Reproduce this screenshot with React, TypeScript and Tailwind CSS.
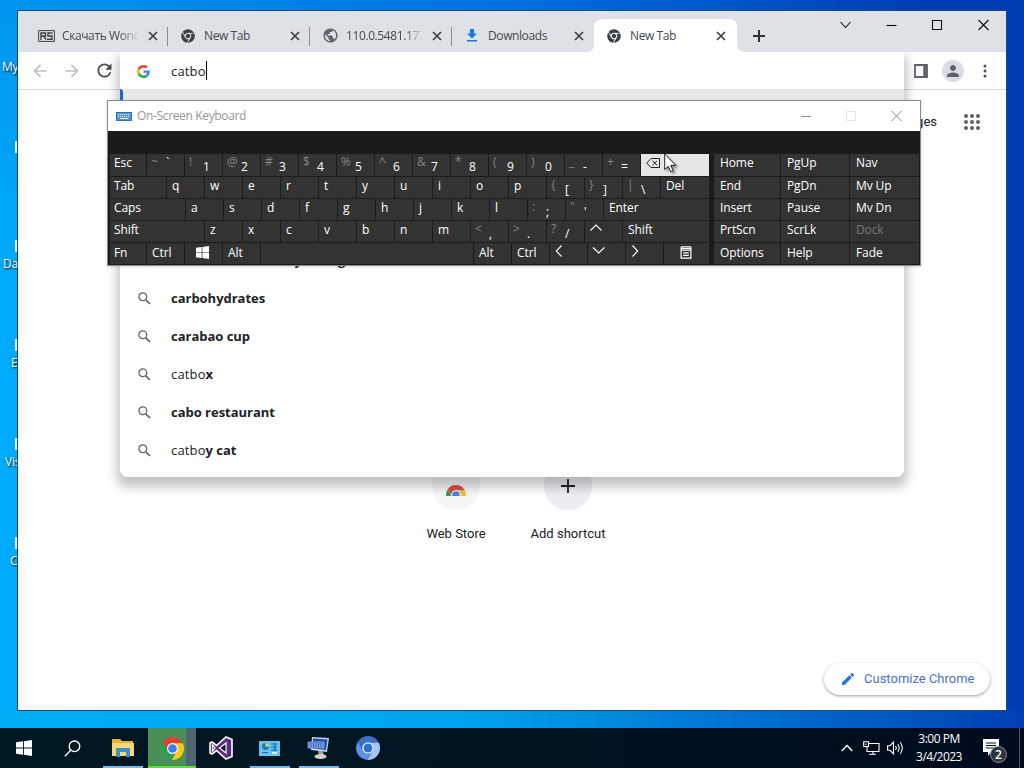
import type { ReactNode } from "react";
import { FaChrome } from "react-icons/fa";
import { MdArrowBack, MdArrowForward, MdEdit, MdPerson, MdPublic, MdRefresh } from "react-icons/md";

type KeyDef = {
  w: number;
  label?: string;
  shift?: string;
  icon?: ReactNode;
  kind?: "active" | "disabled";
};

function Chevron({ d }: { d: string }) {
  return (
    <svg width="14" height="14" viewBox="0 0 14 14" fill="none" stroke="#fff" strokeWidth="1.1">
      <path d={d} />
    </svg>
  );
}

function WindowsLogo({ size }: { size: number }) {
  return (
    <svg width={size} height={size} viewBox="0 0 16 16" fill="#fff">
      <path d="M0 2.3 7 1.3V7.6H0ZM7.9 1.2 16 0V7.6H7.9ZM0 8.4H7V14.7L0 13.7ZM7.9 8.4H16V16L7.9 14.8Z" />
    </svg>
  );
}

const letters = (s: string): KeyDef[] => s.split("").map((label) => ({ w: 38, label }));
const pairs = (list: string[]): KeyDef[] => list.map((p) => ({ w: 38, shift: p[0], label: p[1] }));

const mainRows: KeyDef[][] = [
  [
    { w: 37, label: "Esc" },
    ...pairs(["~`", "!1", "@2", "#3", "$4", "%5", "^6", "&7", "*8", "(9", ")0", "_-", "+="]),
    {
      w: 69,
      kind: "active",
      icon: (
        <svg width="15" height="12" viewBox="0 0 15 12" fill="none" stroke="#222" strokeWidth="1" className="mt-[3px] ml-px">
          <path d="M5 1.5H13.5V10.5H5L.8 6ZM6.5 3.8 11 8.2M11 3.8 6.5 8.2" />
        </svg>
      ),
    },
  ],
  [{ w: 57, label: "Tab" }, ...letters("qwertyuiop"), ...pairs(["{[", "}]", "|\\"]), { w: 49, label: "Del" }],
  [{ w: 76, label: "Caps" }, ...letters("asdfghjkl"), ...pairs([":;", "\"'"]), { w: 106, label: "Enter" }],
  [
    { w: 95, label: "Shift" },
    ...letters("zxcvbnm"),
    ...pairs(["<,", ">.", "?/"]),
    { w: 38, icon: <Chevron d="M1.5 9.5 7 4 12.5 9.5" /> },
    { w: 87, label: "Shift" },
  ],
  [
    { w: 37, label: "Fn" },
    { w: 38, label: "Ctrl" },
    { w: 38, icon: <span className="ml-[7px] mt-[2px]"><WindowsLogo size={13} /></span> },
    { w: 38, label: "Alt" },
    { w: 213 },
    { w: 38, label: "Alt" },
    { w: 38, label: "Ctrl" },
    { w: 38, icon: <Chevron d="M7.5 1.500 2.300 7 7.500 12.500" /> },
    { w: 38, icon: <Chevron d="M1 3.500 6.700 9 12.400 3.500" /> },
    { w: 38, icon: <Chevron d="M2.500 1.500 7.700 7 2.500 12.500" /> },
    {
      w: 46,
      icon: (
        <svg width="12" height="13" viewBox="0 0 12 13" fill="none" stroke="#fff" strokeWidth="1.2" className="ml-[12px] mt-[2px]">
          <path d="M1 .8H11M1 2.500H11M1.100 4.200H10.900V12.200H1.100ZM3.200 6.800H8.800M3.200 9.400H8.800M1.100 1V4.200M10.900 1V4.200" />
        </svg>
      ),
    },
  ],
];

const sideRows: KeyDef[][] = [
  ["Home", "PgUp", "Nav"],
  ["End", "PgDn", "Mv Up"],
  ["Insert", "Pause", "Mv Dn"],
  ["PrtScn", "ScrLk", "Dock"],
  ["Options", "Help", "Fade"],
].map((row) =>
  row.map((label, i): KeyDef => ({ w: [67, 69, 70][i], label, kind: label === "Dock" ? "disabled" : undefined }))
);

function Key({ k, first, last, side }: { k: KeyDef; first: boolean; last: boolean; side: boolean }) {
  const bg = k.kind === "active" ? "bg-[#e6e6e6]" : "bg-[#333333]";
  const color = k.kind === "disabled" ? "text-[#7a7a7a]" : "text-white";
  const shifted = k.shift && k.shift !== "~";
  return (
    <div className="h-full shrink-0 pr-px" style={{ width: k.w }}>
      <div className={`flex h-full items-start whitespace-nowrap ${side ? "pl-[5px]" : "pl-1"} ${last ? "pt-px" : ""} ${bg} ${color}`}>
        {k.shift && <span className="-mt-px w-[14px] shrink-0 text-[12px] text-[#858585]">{k.shift}</span>}
        {k.icon}
        {k.label && <span className={shifted ? "pt-1" : first ? "" : "pl-px"}>{k.label}</span>}
      </div>
    </div>
  );
}

function KeyBlock({ rows, side = false }: { rows: KeyDef[][]; side?: boolean }) {
  return (
    <div>
      {rows.map((row, i) => (
        <div key={i} className={`flex pb-px ${i === 0 ? "h-[23px]" : "h-[22px]"}`}>
          {row.map((k, j) => (
            <Key key={j} k={k} first={!side && j === 0} last={i === 4} side={side} />
          ))}
        </div>
      ))}
    </div>
  );
}

function OnScreenKeyboard() {
  return (
    <div className="absolute left-[107px] top-[100px] h-[166px] w-[814px] overflow-hidden border border-[#8b8b8b] bg-[#1b1b1b] shadow-[0_1px_3px_rgba(0,0,0,0.15)]">
      <div className="flex h-[30px] items-center bg-white text-[12px] text-[#969696]">
        <svg width="16" height="9" viewBox="0 0 16 9" className="ml-2">
          <rect x=".5" y=".5" width="15" height="8" fill="#4f96dc" stroke="#2f72b8" />
          <path d="M2 2.500H14M2 4.500H14" stroke="#fff" strokeWidth="1" strokeDasharray="1 1" />
          <path d="M4 6.500H12" stroke="#fff" />
        </svg>
        <span className="ml-[5px] flex-1 tracking-[-0.35px]">On-Screen Keyboard</span>
        <svg width="102" height="12" viewBox="0 0 102 12" fill="none" stroke="#8a8a8a" className="mr-[17px]">
          <path d="M0 6.500H10" />
          <path d="M45.500 1.500H54.500V10.500H45.500Z" stroke="#e4e4e4" />
          <path d="M90.500 1 100.500 11M100.500 1 90.500 11" />
        </svg>
      </div>
      <div className="flex pl-[2px] pt-[23px] text-[12px] leading-[17px] tracking-[-0.1px]">
        <KeyBlock rows={mainRows} />
        <div className="w-[6px]" />
        <KeyBlock rows={sideRows} side />
      </div>
    </div>
  );
}

function TabClose() {
  return (
    <svg width="10" height="10" viewBox="0 0 10 10" stroke="#3c4043" strokeWidth="1.7" className="shrink-0">
      <path d="M1 1 9 9M9 1 1 9" />
    </svg>
  );
}

const tabs: { title: string; icon: ReactNode; fade?: boolean }[] = [
  {
    title: "Скачать Wonde",
    fade: true,
    icon: (
      <svg width="17" height="12" viewBox="0 0 17 12" fill="none" stroke="#3c4043" strokeWidth="1.2">
        <path d="M.6.6H16.400V11.400H.6Z" strokeWidth="1" />
        <path d="M3 10V3H7.500V6H3M5.500 6 8 9.500M14.500 3H10V6H14V9.200H9" strokeWidth="1.400" />
      </svg>
    ),
  },
  { title: "New Tab", icon: <FaChrome size={14} color="#3c4043" /> },
  { title: "110.0.5481.177", fade: true, icon: <MdPublic size={17} color="#5f6368" /> },
  {
    title: "Downloads",
    icon: (
      <svg width="12" height="13" viewBox="0 0 12 13" fill="#1a7ad8">
        <path d="M4 0H8V4.500H11L6 9.500 1 4.500H4ZM1 11H11V12.500H1Z" />
      </svg>
    ),
  },
  { title: "New Tab", icon: <FaChrome size={14} color="#3c4043" /> },
];

function TabStrip() {
  return (
    <div className="flex h-[41px] shrink-0 items-end bg-[#dee1e6] pl-[8px]">
      {tabs.map((t, i) => {
        const active = i === 4;
        return (
          <div
            key={i}
            className={`relative flex h-[33px] items-center text-[12px] text-[#45494d] ${
              active ? "w-[143px] rounded-t-lg bg-white" : "w-[142px]"
            }`}
          >
            <div className="ml-[11px] flex w-[18px] justify-center">{t.icon}</div>
            <div
              className={`ml-[7px] w-[77px] overflow-hidden whitespace-nowrap tracking-[-0.4px] ${
                t.fade ? "[mask-image:linear-gradient(to_right,black_75%,transparent)]" : ""
              }`}
            >
              {t.title}
            </div>
            <div className="ml-[9px]">
              <TabClose />
            </div>
            {i < 3 && <div className="absolute right-0 top-[8px] h-[19px] w-px bg-[#8a8d91]" />}
            {active && (
              <>
                <svg width="7" height="7" viewBox="0 0 7 7" className="absolute -left-[7px] bottom-0" fill="#fff">
                  <path d="M7 0V7H0A7 7 0 0 0 7 0Z" />
                </svg>
                <svg width="7" height="7" viewBox="0 0 7 7" className="absolute -right-[7px] bottom-0" fill="#fff">
                  <path d="M0 0V7H7A7 7 0 0 1 0 0Z" />
                </svg>
              </>
            )}
          </div>
        );
      })}
      <svg width="12" height="12" viewBox="0 0 12 12" stroke="#303336" strokeWidth="2" className="mb-[10px] ml-[16px]">
        <path d="M6 0V12M0 6H12" />
      </svg>
      <svg width="150" height="12" viewBox="0 0 150 12" fill="none" stroke="#111" strokeWidth="1.1" className="mb-[21px] ml-[75px]">
        <path d="M.5 3 5.500 8.500 10.500 3" />
        <path d="M46.500 6.500H56.500" />
        <path d="M92.500 1.500H101.500V10.500H92.500Z" />
        <path d="M138.500 1 148.500 11M148.500 1 138.500 11" />
      </svg>
    </div>
  );
}

function GoogleG() {
  return (
    <svg width="13" height="13" viewBox="0 0 48 48">
      <path fill="#EA4335" d="M24 9.500c3.540 0 6.710 1.220 9.210 3.600l6.850-6.850C35.900 2.380 30.470 0 24 0 14.620 0 6.510 5.380 2.560 13.220l7.980 6.190C12.430 13.720 17.740 9.500 24 9.500z" />
      <path fill="#4285F4" d="M46.980 24.550c0-1.570-.15-3.090-.38-4.550H24v9.020h12.940c-.58 2.960-2.260 5.480-4.780 7.180l7.730 6c4.510-4.180 7.090-10.360 7.090-17.650z" />
      <path fill="#FBBC05" d="M10.530 28.590c-.48-1.450-.76-2.990-.76-4.590s.27-3.140.76-4.590l-7.980-6.190C.92 16.460 0 20.120 0 24c0 3.880.92 7.540 2.560 10.780l7.970-6.190z" />
      <path fill="#34A853" d="M24 48c6.480 0 11.930-2.130 15.890-5.810l-7.730-6c-2.150 1.450-4.920 2.300-8.160 2.300-6.260 0-11.570-4.220-13.470-9.910l-7.980 6.190C6.510 42.620 14.620 48 24 48z" />
    </svg>
  );
}

// three blades, a white ring and a blue centre; Chromium swaps in blues
function ChromeLogo({ size, colors }: { size: number; colors: [string, string, string, string] }) {
  return (
    <svg width={size} height={size} viewBox="2 2 44 44" className="shrink-0">
      <path fill={colors[0]} d="M24 14H43.600A22 22 0 0 0 5.540 12.030L15.340 29A10 10 0 0 1 24 14Z" />
      <path fill={colors[1]} d="M15.340 29 5.540 12.030A22 22 0 0 0 22.860 45.970L32.660 29A10 10 0 0 1 15.340 29Z" />
      <path fill={colors[2]} d="M32.660 29 22.860 45.970A22 22 0 0 0 43.600 14H24A10 10 0 0 1 32.660 29Z" />
      <circle cx="24" cy="24" r="10.500" fill="#fff" />
      <circle cx="24" cy="24" r="8.300" fill={colors[3]} />
    </svg>
  );
}

function Toolbar() {
  return (
    <div className="flex h-[38px] shrink-0 items-center border-b border-[#d5d7da] bg-white pl-3 text-[#5f6368]">
      <MdArrowBack size={20} color="#bdbfc2" />
      <MdArrowForward size={20} color="#bdbfc2" className="ml-[12px]" />
      <MdRefresh size={21} color="#4a4d51" className="ml-[12px]" />
      <div className="flex-1" />
      <svg width="14" height="14" viewBox="0 0 14 14" fill="none" stroke="#5f6368" strokeWidth="1.8">
        <path d="M1 1H13V13H1Z" />
        <path d="M11 1V13" strokeWidth="3.500" />
      </svg>
      <div className="ml-[14px] flex h-[22px] w-[22px] items-center justify-center rounded-full bg-[#dadde5]">
        <MdPerson size={18} />
      </div>
      <svg width="4" height="14" viewBox="0 0 4 14" fill="#4f5357" className="mr-[19px] ml-[19px]">
        <circle cx="2" cy="2" r="1.500" />
        <circle cx="2" cy="7" r="1.500" />
        <circle cx="2" cy="12" r="1.500" />
      </svg>
    </div>
  );
}

const suggestions = [
  { typed: "", rest: "charleston academy racing" },
  { typed: "", rest: "carbohydrates" },
  { typed: "", rest: "carabao cup" },
  { typed: "catbo", rest: "x" },
  { typed: "", rest: "cabo restaurant" },
  { typed: "catbo", rest: "y cat" },
];

function OmniboxPopup() {
  return (
    <div className="absolute left-[102px] top-0 flex h-[425px] w-[784px] flex-col overflow-hidden rounded-b-lg bg-white text-[13px] text-[#202124]">
      <div className="flex h-[37px] shrink-0 items-center pl-[17px] pt-[2px]">
        <GoogleG />
        <span className="ml-[21px] tracking-[0.15px]">catbo</span>
        <div className="-mt-[2px] h-[19px] w-px bg-black" />
      </div>
      <div className="h-[39px] shrink-0 bg-[#e8e8e8]">
        <div className="h-full w-[3px] rounded-r-sm bg-[#1967d2]" />
      </div>
      <div className="mt-[114px]">
        {suggestions.map((s) => (
          <div key={s.rest} className="flex h-[38px] items-center pl-[18px]">
            <svg width="13" height="13" viewBox="0 0 13 13" fill="none" stroke="#5f6368" className="-mt-[2px]">
              <circle cx="4.800" cy="4.800" r="3.900" strokeWidth="1.300" />
              <path d="M7.800 7.800 12 12" strokeWidth="1.700" />
            </svg>
            <span className="ml-[20px] tracking-[0.15px]">
              {s.typed}
              <b className="font-bold tracking-[-0.02px]">{s.rest}</b>
            </span>
          </div>
        ))}
      </div>
    </div>
  );
}

function NewTabPage() {
  return (
    <div className="flex flex-1 flex-col font-['Roboto',sans-serif] text-[13px] text-[#202124]">
      <div className="mt-[22px] flex items-center justify-end pr-[26px]">
        <span className="mr-[27px]">Images</span>
        <svg width="16" height="16" viewBox="0 0 16 16" fill="#5f6368">
          {[2, 8, 14].map((y) => [2, 8, 14].map((x) => <circle key={`${x}-${y}`} cx={x} cy={y} r="2" />))}
        </svg>
      </div>
      <div className="mt-[330px] flex justify-center gap-0">
        <div className="flex w-[112px] flex-col items-center">
          <div className="flex h-12 w-12 items-center justify-center rounded-full bg-[#f5f6f8]">
            <div className="mt-[9px] h-[11px] overflow-hidden">
              <ChromeLogo size={20} colors={["#d85140", "#3b9a5b", "#f3c13c", "#4b83e8"]} />
            </div>
          </div>
          <span className="mt-[14px]">Web Store</span>
        </div>
        <div className="flex w-[112px] flex-col items-center">
          <div className="flex h-12 w-12 items-center justify-center rounded-full bg-[#eceef1]">
            <svg width="14" height="14" viewBox="0 0 14 14" stroke="#202124" strokeWidth="1.8">
              <path d="M7 0V14M0 7H14" />
            </svg>
          </div>
          <span className="mt-[14px]">Add shortcut</span>
        </div>
      </div>
      <div className="mt-auto mb-[15px] mr-[16px] flex h-8 w-[166px] items-center self-end rounded-full bg-white pl-[16px] text-[#4a72c4] shadow-[0_1px_3px_rgba(0,0,0,0.4)]">
        <MdEdit size={16} color="#2f6fdb" />
        <span className="ml-[8px] text-[13px]">Customize Chrome</span>
      </div>
    </div>
  );
}

function ChromeWindow() {
  return (
    <div className="absolute left-[17px] top-[10px] flex h-[701px] w-[990px] flex-col border border-[#1d4a70] bg-white">
      <TabStrip />
      <div className="relative flex flex-1 flex-col overflow-hidden">
        <Toolbar />
        <NewTabPage />
        <div className="absolute left-[102px] top-0 h-[425px] w-[784px] rounded-b-lg shadow-[0_7px_11px_3px_rgba(0,0,0,0.24)]" />
        <OmniboxPopup />
      </div>
    </div>
  );
}

const desktopLabels = [
  { text: "My", top: "top-[59px]", left: "left-[2px]" },
  { text: "Dat", top: "top-[256px]", left: "left-[3px]" },
  { text: "Ex", top: "top-[355px]", left: "left-[11px]" },
  { text: "Visu", top: "top-[454px]", left: "left-[5px]" },
  { text: "Ch", top: "top-[553px]", left: "left-[10px]" },
];

const shortcutBadges = ["top-[141px]", "top-[240px]", "top-[339px]", "top-[438px]", "top-[537px]"];

function TaskButton({ children, open }: { children: ReactNode; open?: boolean }) {
  return (
    <div className="relative flex h-full w-[49px] items-center justify-center">
      {children}
      {open && <div className="absolute bottom-0 h-[2px] w-10 bg-[#76b9ed]" />}
    </div>
  );
}

function Taskbar() {
  return (
    <div className="absolute bottom-0 left-0 flex h-10 w-full items-center bg-linear-to-r from-[#001823] via-[#001522] to-[#000a1e] text-white">
      <div className="flex h-full w-12 items-center justify-center">
        <WindowsLogo size={16} />
      </div>
      <div className="flex h-full w-[50px] items-center pl-[16px]">
        <svg width="17" height="17" viewBox="0 0 17 17" fill="none" stroke="#fff" strokeWidth="1.3">
          <circle cx="10.500" cy="6.300" r="5.300" />
          <path d="M6.700 10.200.8 16.200" />
        </svg>
      </div>
      <TaskButton open>
        <svg width="22" height="20" viewBox="0 0 22 20">
          <path d="M0 1H8L10 3H21V18H0Z" fill="#e8b339" />
          <path d="M0 5H22V18H0Z" fill="#fbd873" />
          <path d="M4 10H18V19H14V14H8V19H4Z" fill="#3f8fc9" />
        </svg>
      </TaskButton>
      <div className="ml-px flex h-full w-[48px] items-center border-b-2 border-[#5be03a] bg-linear-to-r from-[#4a8f58] from-79% to-[#4e6470] to-79% pl-[13px] pt-[2px]">
        <ChromeLogo size={23} colors={["#e04035", "#2fa04f", "#fbc719", "#3b7ded"]} />
      </div>
      <TaskButton>
        <svg width="24" height="24" viewBox="0 0 24 24">
          <path d="M17 1 23 3.500V20.500L17 23 7.500 14.500 3 18 1 17V7L3 6 7.500 9.500Z" fill="#5d2d80" stroke="#fff" strokeWidth="1.600" />
          <path d="M3.500 9V15L6 12ZM10.500 12 17 7V17Z" fill="#001522" stroke="#fff" strokeWidth="1.200" />
        </svg>
      </TaskButton>
      <TaskButton open>
        <svg width="21" height="15" viewBox="0 0 21 15">
          <path d="M0 0H21V15H0Z" fill="#62c4ee" />
          <circle cx="6.500" cy="5.500" r="3.500" fill="#2678b8" />
          <path d="M6.500 5.500V2A3.500 3.500 0 0 1 10 5.500Z" fill="#f2d34f" />
          <path d="M12 3H18M12 6H18M12 9H18M3 11.500H9M16 2V10" stroke="#146ea8" strokeWidth="1.200" />
          <path d="M13 12H18" stroke="#fff" strokeWidth="1.500" />
        </svg>
      </TaskButton>
      <TaskButton open>
        <svg width="24" height="24" viewBox="0 0 24 24" className="-mt-px">
          <path d="M5 1 22 2 20 16 4 14Z" fill="#c9d2de" />
          <path d="M6 2.500 20.500 3.500 19 14 5.500 12.500Z" fill="#1c4db0" />
          <path d="M1 6H17V12H1Z" fill="#2d62c0" stroke="#b9cdf0" strokeWidth=".7" />
          <path d="M2 8H16M2 10H16" stroke="#d5e3fa" strokeDasharray="1.500 1" />
          <path d="M11 15H16L17 20H12Z" fill="#9aa2ab" />
          <ellipse cx="13.500" cy="20.500" rx="6" ry="2.500" fill="#d6d2c8" />
        </svg>
      </TaskButton>
      <TaskButton>
        <ChromeLogo size={24} colors={["#3a6fc8", "#5b90e6", "#a6c6fa", "#2f6fdc"]} />
      </TaskButton>
      <div className="flex-1" />
      <svg width="12" height="8" viewBox="0 0 12 8" fill="none" stroke="#fff" strokeWidth="1.300">
        <path d="M.7 7 6 1.500 11.300 7" />
      </svg>
      <svg width="17" height="14" viewBox="0 0 17 14" fill="none" stroke="#fff" strokeWidth="1.100" className="ml-[10px]">
        <path d="M6 2.500H16V10.500H4V6M10 10.500V13M6 13.300H13M.7.7H5.500V5.500H.7ZM3 2.500V4" />
      </svg>
      <svg width="17" height="14" viewBox="0 0 17 14" fill="none" stroke="#fff" strokeWidth="1.100" className="ml-[7px]">
        <path d="M.6 4.700H3L6.500 1.200V12.800L3 9.300H.6ZM8.500 5Q10 7 8.500 9M10.800 3.200Q13.500 7 10.800 10.800M13.200 1.200Q17.400 7 13.200 12.800" />
      </svg>
      <div className="ml-[7px] flex w-[56px] flex-col items-center whitespace-nowrap text-[12px] leading-[18px] tracking-[-0.5px]">
        <span>3:00 PM</span>
        <span>3/4/2023</span>
      </div>
      <div className="relative ml-[16px] mr-[10px] h-[22px] w-[26px]">
        <svg width="18" height="18" viewBox="0 0 18 18" className="mt-[2px]">
          <path d="M0 0H16V13H8L5 17V13H0Z" fill="#fff" />
          <path d="M3 4H13M3 6.500H13M3 9H13" stroke="#00101f" />
        </svg>
        <div className="absolute left-[7px] top-[9px] flex h-[17px] w-[17px] items-center justify-center rounded-full border border-[#8b8f96] bg-[#2f353d] text-[12px] font-semibold">
          2
        </div>
      </div>
      <div className="h-full w-px bg-[#4b5563]" />
      <div className="w-[4px]" />
    </div>
  );
}

export default function App() {
  return (
    <div className="relative h-[768px] w-[1024px] overflow-hidden bg-linear-to-r from-[#00acfc] via-[#0078df] via-50% to-[#003db4] to-90% font-['Open_Sans','Noto_Sans',sans-serif]">
      {/* the wallpaper is darker along the top and brightens down the left side */}
      <div className="absolute left-0 top-0 h-[11px] w-full bg-linear-to-r from-[#0096ee] via-[#0070e0] via-50% to-[#003db4] to-90%" />
      <div className="absolute left-0 top-0 h-[300px] w-[18px] bg-linear-to-b from-[#0096ee] to-[#00acfc]" />
      <div className="absolute bottom-10 left-0 h-[18px] w-full bg-linear-to-r from-[#00aff8] via-[#00a3ee] via-45% to-[#003fb4]" />
      {desktopLabels.map((l) => (
        <span key={l.text} className={`absolute ${l.top} ${l.left} text-[12px] leading-4 tracking-[-0.2px] text-white [text-shadow:1px_1px_2px_#000]`}>
          {l.text}
        </span>
      ))}
      {shortcutBadges.map((top) => (
        <div key={top} className={`absolute left-[15px] ${top} h-[12px] w-[5px] bg-[#dcefff]`} />
      ))}
      <ChromeWindow />
      <OnScreenKeyboard />
      <Taskbar />
      <svg width="14" height="20" viewBox="0 0 14 20" className="absolute left-[664px] top-[153px] drop-shadow-[2px_2px_1px_rgba(0,0,0,0.4)]">
        <path d="M.7 1V16.500L4.300 13.200 6.700 18.800 9.200 17.700 6.800 12.300H11.800Z" fill="#fff" stroke="#111" strokeWidth=".9" />
      </svg>
    </div>
  );
}
